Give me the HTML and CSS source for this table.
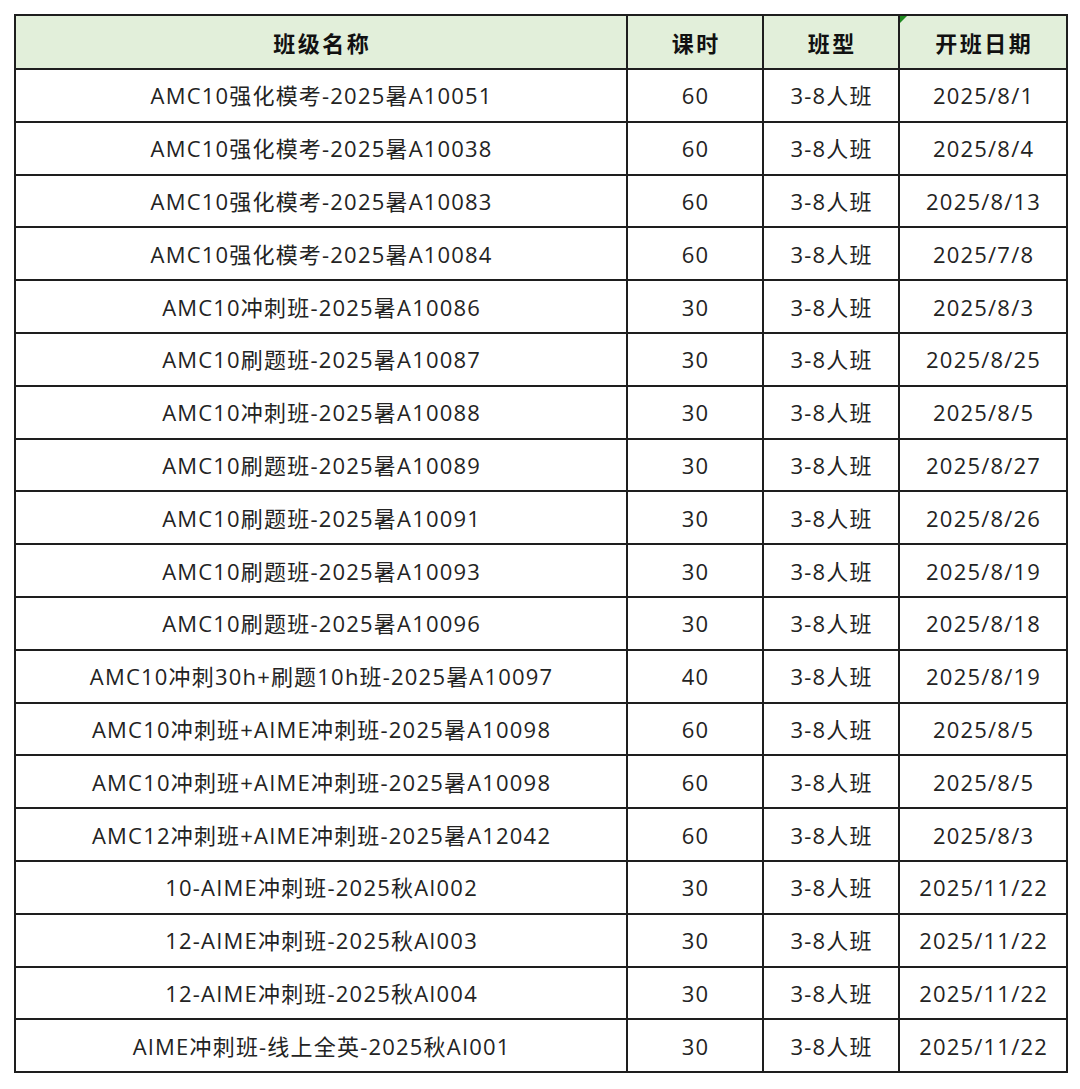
FILE: index.html
```html
<!DOCTYPE html>
<html lang="zh-CN">
<head>
<meta charset="utf-8">
<title>班级列表</title>
<link rel="stylesheet" href="styles.css">
</head>
<body>
<div class="page">
<table class="sheet">
<colgroup><col class="c-name"><col class="c-hours"><col class="c-type"><col class="c-date"></colgroup>
<thead>
<tr><th>班级名称</th><th>课时</th><th>班型</th><th class="noted">开班日期</th></tr>
</thead>
<tbody>
<tr><td>AMC10强化模考-2025暑A10051</td><td>60</td><td>3-8人班</td><td>2025/8/1</td></tr>
<tr><td>AMC10强化模考-2025暑A10038</td><td>60</td><td>3-8人班</td><td>2025/8/4</td></tr>
<tr><td>AMC10强化模考-2025暑A10083</td><td>60</td><td>3-8人班</td><td>2025/8/13</td></tr>
<tr><td>AMC10强化模考-2025暑A10084</td><td>60</td><td>3-8人班</td><td>2025/7/8</td></tr>
<tr><td>AMC10冲刺班-2025暑A10086</td><td>30</td><td>3-8人班</td><td>2025/8/3</td></tr>
<tr><td>AMC10刷题班-2025暑A10087</td><td>30</td><td>3-8人班</td><td>2025/8/25</td></tr>
<tr><td>AMC10冲刺班-2025暑A10088</td><td>30</td><td>3-8人班</td><td>2025/8/5</td></tr>
<tr><td>AMC10刷题班-2025暑A10089</td><td>30</td><td>3-8人班</td><td>2025/8/27</td></tr>
<tr><td>AMC10刷题班-2025暑A10091</td><td>30</td><td>3-8人班</td><td>2025/8/26</td></tr>
<tr><td>AMC10刷题班-2025暑A10093</td><td>30</td><td>3-8人班</td><td>2025/8/19</td></tr>
<tr><td>AMC10刷题班-2025暑A10096</td><td>30</td><td>3-8人班</td><td>2025/8/18</td></tr>
<tr><td>AMC10冲刺30h+刷题10h班-2025暑A10097</td><td>40</td><td>3-8人班</td><td>2025/8/19</td></tr>
<tr><td>AMC10冲刺班+AIME冲刺班-2025暑A10098</td><td>60</td><td>3-8人班</td><td>2025/8/5</td></tr>
<tr><td>AMC10冲刺班+AIME冲刺班-2025暑A10098</td><td>60</td><td>3-8人班</td><td>2025/8/5</td></tr>
<tr><td>AMC12冲刺班+AIME冲刺班-2025暑A12042</td><td>60</td><td>3-8人班</td><td>2025/8/3</td></tr>
<tr><td>10-AIME冲刺班-2025秋AI002</td><td>30</td><td>3-8人班</td><td>2025/11/22</td></tr>
<tr><td>12-AIME冲刺班-2025秋AI003</td><td>30</td><td>3-8人班</td><td>2025/11/22</td></tr>
<tr><td>12-AIME冲刺班-2025秋AI004</td><td>30</td><td>3-8人班</td><td>2025/11/22</td></tr>
<tr><td>AIME冲刺班-线上全英-2025秋AI001</td><td>30</td><td>3-8人班</td><td>2025/11/22</td></tr>
</tbody>
</table>
</div>
</body>
</html>
```
FILE: styles.css
```css
html, body {
  margin: 0;
  padding: 0;
  background: #ffffff;
}
.page {
  padding: 14px 0 0 14px;
}
.sheet {
  border-collapse: collapse;
  table-layout: fixed;
  width: 1052px;
  font-family: "Open Sans", "Noto Sans CJK SC", sans-serif;
  font-size: 22px;
  color: #232323;
}
.c-name { width: 612px; }
.c-hours { width: 136px; }
.c-type { width: 136px; }
.c-date { width: 168px; }
.sheet th, .sheet td {
  border: 2px solid #1e1e1e;
  text-align: center;
  vertical-align: middle;
  padding: 0;
  line-height: 1;
  white-space: nowrap;
}
.sheet td {
  letter-spacing: 1.2px;
  padding-left: 1.2px;
}
.sheet thead tr { height: 54px; }
.sheet tbody tr { height: 52.8px; }
.sheet th {
  background: #e2efda;
  font-family: "Noto Sans CJK SC", sans-serif;
  font-weight: bold;
  font-size: 22px;
  letter-spacing: 2.5px;
  padding-left: 2.5px;
  color: #111;
}
.sheet th.noted {
  position: relative;
}
.sheet th.noted::before {
  content: "";
  position: absolute;
  left: 0;
  top: 0;
  width: 0;
  height: 0;
  border-top: 7px solid #1f8a1f;
  border-right: 7px solid transparent;
}
```
